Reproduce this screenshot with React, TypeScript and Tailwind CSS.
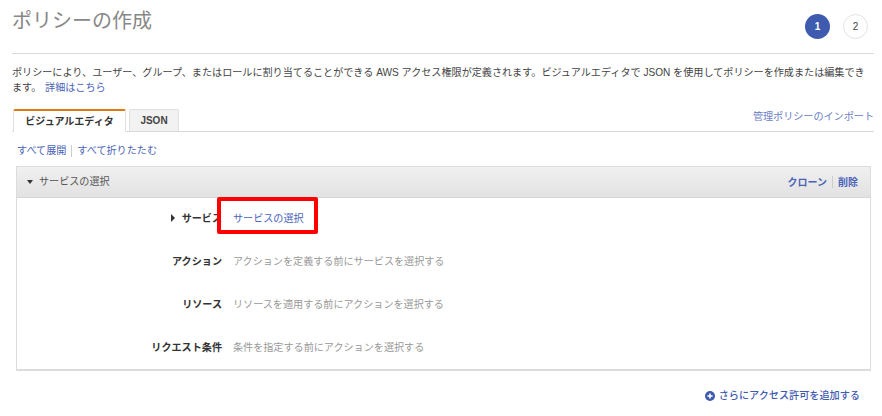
const jp = "font-['Liberation_Sans','Noto_Sans_CJK_JP',sans-serif]";

function Row({ label, value, link, caret }: { label: string; value: string; link?: boolean; caret?: boolean }) {
  return (
    <div className="flex h-[43px] items-center">
      <div className="flex w-[205px] items-center justify-end gap-[7px] text-[10.1px] font-bold text-[#333]">
        {caret && <span className="h-0 w-0 border-y-[4px] border-l-[4px] border-y-transparent border-l-[#333]" />}
        <span>{label}</span>
      </div>
      <div className={`ml-[11px] text-[10.1px] ${link ? "text-[#4a63b8]" : "text-[#999]"}`}>{value}</div>
    </div>
  );
}

export default function App() {
  return (
    <div className={`${jp} relative h-[416px] w-[882px] overflow-hidden bg-white pr-2 pl-3 text-[#444]`}>
      <div className="flex h-[54px] items-start justify-between border-b border-[#d9d9d9] pr-[6px]">
        <h1 className="mt-[7px] text-[20px] leading-[28px] font-normal text-[#888]">ポリシーの作成</h1>
        <div className="mt-[14px] flex gap-[13px]">
          <span className="flex h-[25px] w-[25px] items-center justify-center rounded-full bg-[#3f5bb0] text-[10px] font-bold text-white">1</span>
          <span className="flex h-[25px] w-[25px] items-center justify-center rounded-full border border-[#e3e3e3] text-[10px] text-[#444]">2</span>
        </div>
      </div>
      <p className="mt-[11px] text-[10.1px] leading-[15px] text-[#444]">
        ポリシーにより、ユーザー、グループ、またはロールに割り当てることができる AWS アクセス権限が定義されます。ビジュアルエディタで JSON を使用してポリシーを作成または編集できます。 <span className="ml-px text-[#4a63b8]">詳細はこちら</span>
      </p>
      <div className="mt-[14px] flex h-[23px] items-end justify-between border-b border-[#d9d9d9]">
        <div className="ml-px flex gap-[3px]">
          <div className="-mb-px flex h-[23px] w-[113px] items-center justify-center rounded-t-[2px] border-x border-t-2 border-x-[#e0e0e0] border-t-[#dd7a10] bg-white text-[10px] font-bold text-[#333]">ビジュアルエディタ</div>
          <div className="flex h-[22px] w-[50px] items-center justify-center rounded-t-[2px] border-x border-t border-[#e0e0e0] bg-[#f2f2f2] text-[10px] font-bold text-[#444]">JSON</div>
        </div>
        <span className="mb-[6px] text-[10.1px] leading-[16px] text-[#6b80c4]">管理ポリシーのインポート</span>
      </div>
      <div className="mt-[11px] ml-[5px] flex h-[15px] items-center text-[10.1px] text-[#4a63b8]">
        <span>すべて展開</span>
        <span className="mx-[5px] h-[12px] w-px bg-[#ccc]" />
        <span>すべて折りたたむ</span>
      </div>
      <div className="mt-[8px] mr-[3px] ml-[4px] border border-b-2 border-[#dcdcdc]">
        <div className="flex h-[31px] items-center justify-between border-b border-[#d6d6d6] bg-gradient-to-b from-[#f0f0f0] to-[#e2e2e2] pr-[12px] pl-[10px]">
          <div className="flex items-center gap-[6px] text-[10.1px] text-[#555]">
            <span className="h-0 w-0 border-x-[3.5px] border-t-[4px] border-x-transparent border-t-[#333]" />
            <span>サービスの選択</span>
          </div>
          <div className="flex items-center text-[10px] font-bold text-[#4a63b8]">
            <span>クローン</span>
            <span className="mx-[5px] h-[12px] w-px bg-[#ccc]" />
            <span>削除</span>
          </div>
        </div>
        <div className="relative -mt-px">
          <Row label="サービス" value="サービスの選択" link caret />
          <Row label="アクション" value="アクションを定義する前にサービスを選択する" />
          <Row label="リソース" value="リソースを適用する前にアクションを選択する" />
          <Row label="リクエスト条件" value="条件を指定する前にアクションを選択する" />
          <div className="absolute top-0 left-[200px] h-[37px] w-[101px] rounded-[2px] border-[4px] border-[#ff0000]" />
        </div>
      </div>
      <div className="mt-[17px] mr-[14px] flex items-center justify-end gap-[4px] text-[10.15px] font-medium text-[#3f5bb0]">
        <svg width="10" height="10" viewBox="0 0 10 10">
          <circle cx="5" cy="5" r="5" fill="#3f5bb0" />
          <path d="M5 2.4v5.2M2.4 5h5.2" stroke="#fff" strokeWidth="1.6" />
        </svg>
        <span>さらにアクセス許可を追加する</span>
      </div>
    </div>
  );
}
